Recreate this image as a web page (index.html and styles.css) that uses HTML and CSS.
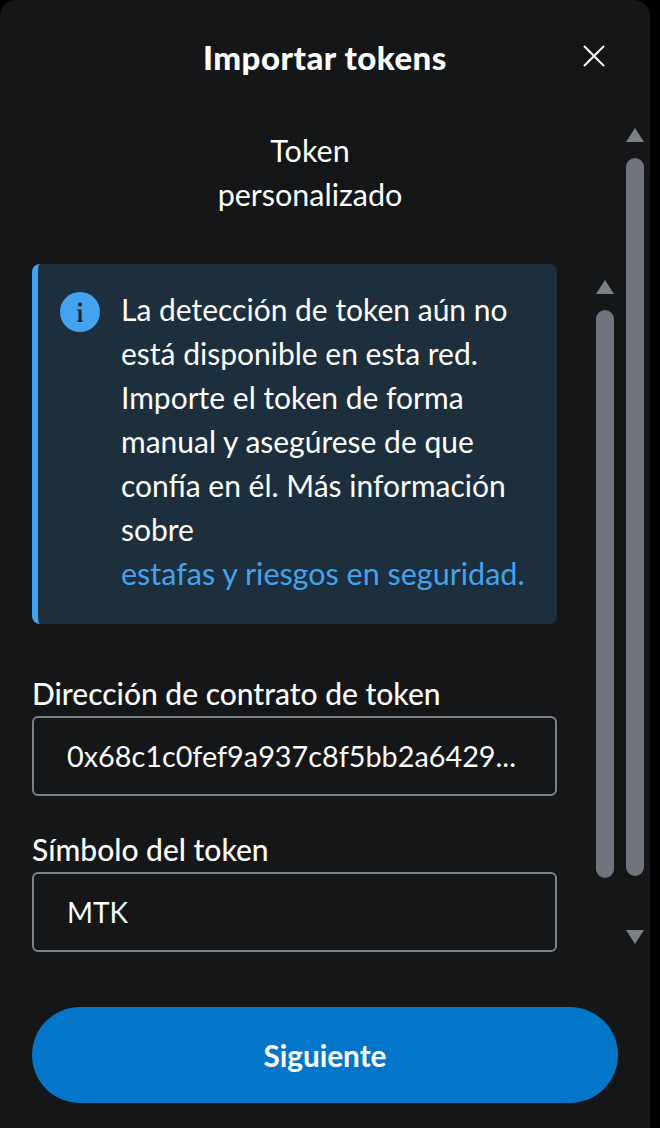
FILE: index.html
```html
<!DOCTYPE html>
<html lang="es">
<head>
  <meta charset="UTF-8">
  <meta name="viewport" content="width=device-width, initial-scale=1.0">
  <title>Importar tokens</title>
  <link rel="stylesheet" href="styles.css">
</head>
<body>
  <div class="panel">
    <div class="header">
      <h1>Importar tokens</h1>
      <button class="close" aria-label="Cerrar">
        <svg width="24" height="24" viewBox="0 0 24 24" fill="none" stroke="#fff" stroke-width="2">
          <path d="M2 2 L22 22 M22 2 L2 22"/>
        </svg>
      </button>
    </div>

    <div class="outer-scroll">
      <div class="outer-content">
        <div class="tab">Token<br>personalizado</div>

        <div class="inner-scroll">
          <div class="form">
            <div class="notice">
              <svg class="notice-icon" width="40" height="40" viewBox="0 0 40 40">
                <circle cx="20" cy="20" r="20" fill="#43a3ee"/>
                <circle cx="20" cy="12.5" r="2" fill="#14202c"/>
                <path d="M17.5 17.5 H21.5 V28.5 H22.5 V30 H17.5 V28.5 H18.5 V19 H17.5 Z" fill="#14202c"/>
              </svg>
              <p>La detección de token aún no está disponible en esta red. Importe el token de forma manual y asegúrese de que confía en él. Más información sobre <a href="#">estafas y riesgos en seguridad.</a></p>
            </div>

            <label class="field-label">Dirección de contrato de token</label>
            <div class="field address">0x68c1c0fef9a937c8f5bb2a6429...</div>

            <label class="field-label second">Símbolo del token</label>
            <div class="field">MTK</div>
          </div>

          <div class="scrollbar inner-bar">
            <span class="arrow up"></span>
            <span class="thumb"></span>
          </div>
        </div>
      </div>

      <div class="scrollbar outer-bar">
        <span class="arrow up"></span>
        <span class="thumb"></span>
        <span class="arrow down"></span>
      </div>
    </div>

    <button class="next">Siguiente</button>
  </div>
</body>
</html>
```

FILE: styles.css
```css
* {
  box-sizing: border-box;
}

html,
body {
  margin: 0;
  height: 100%;
  background-color: #000;
}

body {
  font-family: "Lato", "Noto Sans", sans-serif;
  color: #fff;
  overflow: hidden;
}

.panel {
  width: 650px;
  height: 1128px;
  background-color: #141618;
  border-radius: 16px 16px 0 0;
  padding: 0 6px 0 32px;
}

.header {
  height: 128px;
  padding-right: 38px;
  display: flex;
  align-items: flex-start;
  justify-content: space-between;
}

.header h1 {
  margin: 38px 0 0 171px;
  font-size: 33px;
  line-height: 38px;
  font-weight: 900;
  letter-spacing: 0.5px;
}

.close {
  margin-top: 44px;
  padding: 0;
  width: 24px;
  height: 24px;
  background: none;
  border: none;
}

.outer-scroll {
  display: flex;
  justify-content: space-between;
  height: 823px;
}

.outer-content {
  width: 582px;
}

.tab {
  width: 556px;
  text-align: center;
  font-size: 30.5px;
  line-height: 44px;
  padding-bottom: 48px;
}

.inner-scroll {
  display: flex;
  justify-content: space-between;
}

.form {
  width: 525px;
}

.notice {
  display: flex;
  gap: 21px;
  height: 360px;
  padding: 28px 24px 0 22px;
  background-color: #1d2e3d;
  border-left: 6px solid #43a3ee;
  border-radius: 8px;
}

.notice-icon {
  flex-shrink: 0;
}

.notice p {
  margin: -5px 0 0;
  font-size: 30px;
  line-height: 44px;
}

.notice a {
  display: block;
  font-size: 30.5px;
  color: #43a3ee;
  text-decoration: none;
  white-space: nowrap;
}

.field-label {
  display: block;
  margin-top: 48px;
  font-size: 30px;
  line-height: 42px;
  font-weight: 500;
}

.field-label.second {
  margin-top: 32px;
}

.field {
  height: 80px;
  margin-top: 2px;
  padding-left: 33px;
  border: 2px solid #7d8085;
  border-radius: 6px;
  font-size: 28px;
  line-height: 76px;
}

.field.address {
  font-size: 28.8px;
}

.scrollbar {
  display: flex;
  flex-direction: column;
  align-items: center;
}

.outer-bar {
  width: 18px;
}

.inner-bar {
  width: 18px;
  height: 598px;
  margin-top: 16px;
}

.outer-bar .thumb {
  height: 718px;
}

.outer-bar .arrow.down {
  margin-top: 54px;
}

.inner-bar .thumb {
  height: 568px;
}

.arrow {
  width: 0;
  height: 0;
  border-left: 9px solid transparent;
  border-right: 9px solid transparent;
}

.arrow.up {
  border-bottom: 14px solid #7b7f87;
}

.arrow.down {
  border-top: 14px solid #7b7f87;
}

.thumb {
  display: block;
  width: 18px;
  margin-top: 16px;
  background-color: #70747d;
  border-radius: 9px;
}

.next {
  display: block;
  width: 586px;
  height: 96px;
  margin-top: 56px;
  background-color: #0376c9;
  border: none;
  border-radius: 48px;
  color: #fff;
  font-family: inherit;
  font-size: 29.7px;
  font-weight: 700;
}
```
